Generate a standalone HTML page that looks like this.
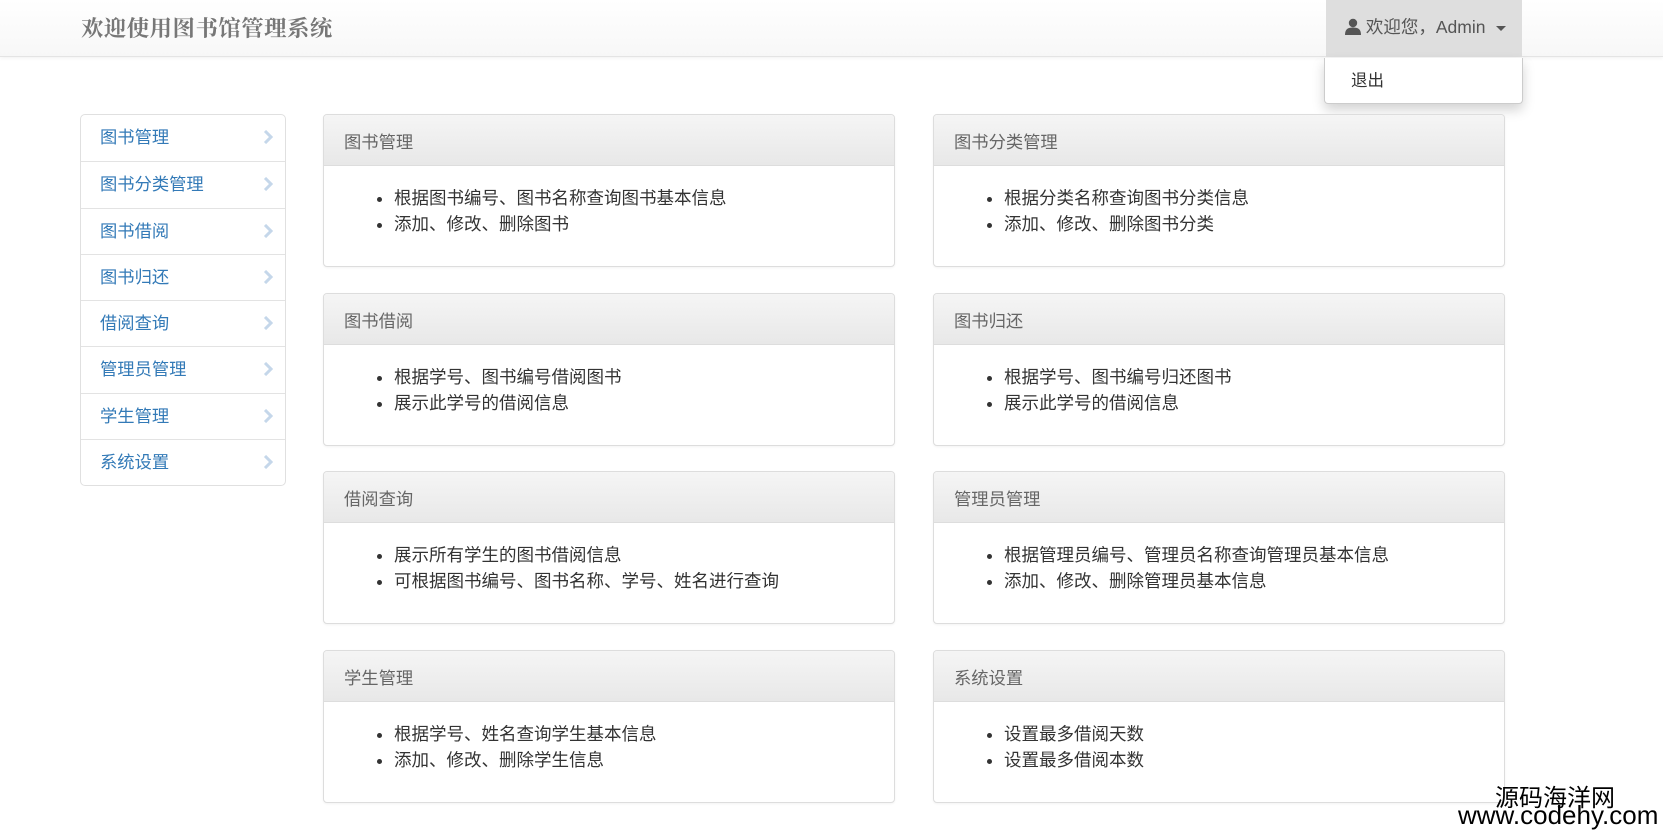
<!DOCTYPE html>
<html><head><meta charset="utf-8">
<style>
*{box-sizing:border-box;margin:0;padding:0}
body{width:1663px;height:835px;background:#fff;font-family:"Liberation Sans","Noto Sans CJK SC",sans-serif;position:relative;overflow:hidden;color:#333}
.nav{position:absolute;left:0;top:0;width:1663px;height:57px;background:linear-gradient(#fff,#f7f7f7);border-bottom:1px solid #e4e4e4;box-shadow:0 1px 4px rgba(0,0,0,.06)}
.brand{position:absolute;left:81px;top:11px;font-family:"Liberation Serif","Noto Serif CJK SC",serif;font-size:22.4px;color:#777;font-weight:bold;letter-spacing:0.5px}
.tog{position:absolute;left:1326px;top:0;width:196px;height:57px;background:#dedede;color:#555;font-size:17.5px;line-height:54px;padding-left:19px}
.caret{display:inline-block;width:0;height:0;border-left:5px solid transparent;border-right:5px solid transparent;border-top:5px solid #555;vertical-align:middle;margin-left:6px}
.menu{position:absolute;left:1324px;top:58px;width:199px;height:46px;background:#fff;border:1px solid #ccc;border-top:none;border-radius:0 0 4px 4px;box-shadow:0 6px 12px rgba(0,0,0,.175);font-size:16.5px;color:#333;padding:9px 0 0 26px}
.side{position:absolute;left:80px;top:114px;width:206px;border:1px solid #e0e0e0;border-radius:5px;background:#fff}
.side div{height:46.3px;border-top:1px solid #e3e3e3;color:#337ab7;font-size:17.3px;line-height:45px;padding-left:19px;position:relative}
.side div:first-child{border-top:none}
.side svg{position:absolute;right:12px;top:15px}
.p{position:absolute;width:572px;height:153px;border:1px solid #ddd;border-radius:4px;box-shadow:0 1px 2px rgba(0,0,0,.05);background:#fff;overflow:hidden}
.p h3{height:51px;background:linear-gradient(#f5f5f5,#e8e8e8);border-bottom:1px solid #ddd;font-weight:normal;font-size:17.3px;color:#666;padding:13px 0 0 20px}
.p ul{padding:20px 0 0 70px;font-size:17.5px;line-height:25.5px;color:#333}
.wm1{position:absolute;left:1495px;top:778px;font-size:24px;color:#000;font-family:"Noto Sans CJK SC",sans-serif}
.wm2{position:absolute;left:1458px;top:800px;font-size:26px;color:#000;font-family:"Liberation Sans",sans-serif}
</style></head><body>
<div class="nav"><div class="brand">欢迎使用图书馆管理系统</div>
<div class="tog"><svg width="16" height="17" viewBox="0 0 16 17" style="vertical-align:-2px"><circle cx="8" cy="5" r="4.2" fill="#555"/><path d="M0 17 C0 11 3 9.5 8 9.5 C13 9.5 16 11 16 17Z" fill="#555"/></svg> 欢迎您，Admin <span class="caret"></span></div></div>
<div class="menu">退出</div>
<div class="side">
<div>图书管理<svg width="10" height="14" viewBox="0 0 10 14"><path d="M2 1l6 6-6 6" stroke="#c5d7ea" stroke-width="3" fill="none"/></svg></div>
<div>图书分类管理<svg width="10" height="14" viewBox="0 0 10 14"><path d="M2 1l6 6-6 6" stroke="#c5d7ea" stroke-width="3" fill="none"/></svg></div>
<div>图书借阅<svg width="10" height="14" viewBox="0 0 10 14"><path d="M2 1l6 6-6 6" stroke="#c5d7ea" stroke-width="3" fill="none"/></svg></div>
<div>图书归还<svg width="10" height="14" viewBox="0 0 10 14"><path d="M2 1l6 6-6 6" stroke="#c5d7ea" stroke-width="3" fill="none"/></svg></div>
<div>借阅查询<svg width="10" height="14" viewBox="0 0 10 14"><path d="M2 1l6 6-6 6" stroke="#c5d7ea" stroke-width="3" fill="none"/></svg></div>
<div>管理员管理<svg width="10" height="14" viewBox="0 0 10 14"><path d="M2 1l6 6-6 6" stroke="#c5d7ea" stroke-width="3" fill="none"/></svg></div>
<div>学生管理<svg width="10" height="14" viewBox="0 0 10 14"><path d="M2 1l6 6-6 6" stroke="#c5d7ea" stroke-width="3" fill="none"/></svg></div>
<div>系统设置<svg width="10" height="14" viewBox="0 0 10 14"><path d="M2 1l6 6-6 6" stroke="#c5d7ea" stroke-width="3" fill="none"/></svg></div>
</div>
<div class="p" style="left:323px;top:114px"><h3>图书管理</h3><ul><li>根据图书编号、图书名称查询图书基本信息</li><li>添加、修改、删除图书</li></ul></div>
<div class="p" style="left:933px;top:114px"><h3>图书分类管理</h3><ul><li>根据分类名称查询图书分类信息</li><li>添加、修改、删除图书分类</li></ul></div>
<div class="p" style="left:323px;top:293px"><h3>图书借阅</h3><ul><li>根据学号、图书编号借阅图书</li><li>展示此学号的借阅信息</li></ul></div>
<div class="p" style="left:933px;top:293px"><h3>图书归还</h3><ul><li>根据学号、图书编号归还图书</li><li>展示此学号的借阅信息</li></ul></div>
<div class="p" style="left:323px;top:471px"><h3>借阅查询</h3><ul><li>展示所有学生的图书借阅信息</li><li>可根据图书编号、图书名称、学号、姓名进行查询</li></ul></div>
<div class="p" style="left:933px;top:471px"><h3>管理员管理</h3><ul><li>根据管理员编号、管理员名称查询管理员基本信息</li><li>添加、修改、删除管理员基本信息</li></ul></div>
<div class="p" style="left:323px;top:650px"><h3>学生管理</h3><ul><li>根据学号、姓名查询学生基本信息</li><li>添加、修改、删除学生信息</li></ul></div>
<div class="p" style="left:933px;top:650px"><h3>系统设置</h3><ul><li>设置最多借阅天数</li><li>设置最多借阅本数</li></ul></div>
<div class="wm1">源码海洋网</div>
<div class="wm2">www.codehy.com</div>
</body></html>
